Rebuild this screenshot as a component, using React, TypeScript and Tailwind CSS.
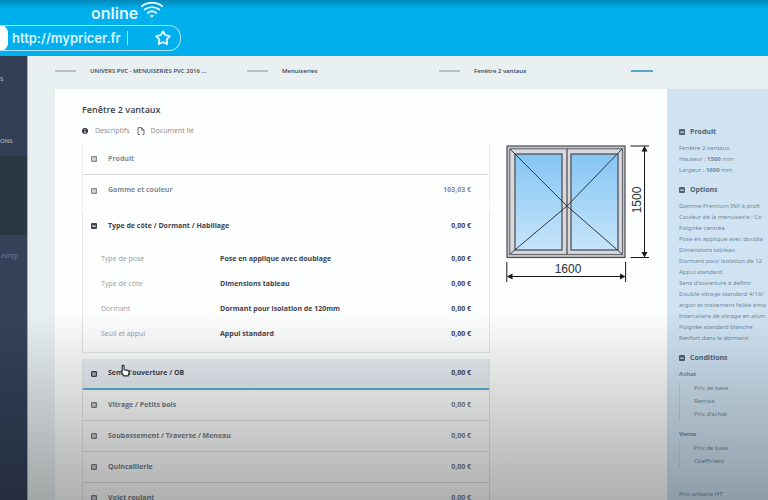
import React, { useState } from "react";
import { Star } from "lucide-react";

const steps = ["UNIVERS PVC - MENUISERIES PVC 2016 ...", "Menuiseries", "Fenêtre 2 vantaux"];

const details = [
  { label: "Type de pose", value: "Pose en applique avec doublage" },
  { label: "Type de côte", value: "Dimensions tableau" },
  { label: "Dormant", value: "Dormant pour isolation de 120mm" },
  { label: "Seuil et appui", value: "Appui standard" },
];

const sections = [
  { id: "sens", name: "Sens d'ouverture / OB" },
  { id: "vitrage", name: "Vitrage / Petits bois" },
  { id: "soubassement", name: "Soubassement / Traverse / Meneau" },
  { id: "quincaillerie", name: "Quincaillerie" },
  { id: "volet", name: "Volet roulant" },
];

const options = [
  "Gamme Premium INF à profi",
  "Couleur de la menuiserie : Co",
  "Poignée centrée",
  "Pose en applique avec doubla",
  "Dimensions tableau",
  "Dormant pour isolation de 12",
  "Appui standard",
  "Sens d'ouverture à definir",
  "Double vitrage standard 4/16/",
  "argon et traitement faible émis",
  "Intercalaire de vitrage en alum",
  "Poignée standard blanche",
  "Renfort dans le dormant",
];

function BoxIcon({ minus = false }: { minus?: boolean }) {
  return (
    <svg viewBox="0 0 6 6" className="w-1.5 h-1.5 shrink-0" aria-hidden="true">
      {minus ? (
        <path fillRule="evenodd" d="M1 0h4a1 1 0 0 1 1 1v4a1 1 0 0 1-1 1H1a1 1 0 0 1-1-1V1a1 1 0 0 1 1-1zM1.300 2.600v1.200h3.400V2.600z" fill="currentColor" />
      ) : (
        <>
          <rect x="0.7" y="0.7" width="4.6" height="4.6" rx="0.6" fill="none" stroke="currentColor" strokeWidth="1.4" />
          <path d="M2 3h2M3 2v2" stroke="currentColor" strokeWidth="0.4" />
        </>
      )}
    </svg>
  );
}

function WifiIcon() {
  return (
    <svg viewBox="0 0 24 18" className="w-6 h-[18px]" fill="none" stroke="currentColor" strokeWidth="1.9" strokeLinecap="round" aria-hidden="true">
      <path d="M1.800 6.200C7.500 1.600 16.500 1.600 22.200 6.200" />
      <path d="M4.800 9.600c4-3.300 10.400-3.300 14.400 0" />
      <path d="M7.800 13c2.500-2 5.900-2 8.400 0" />
      <path d="M10.600 15.600q1.400-.9 2.800 0L12 17z" fill="currentColor" strokeWidth="1" />
    </svg>
  );
}

function WindowDrawing() {
  return (
    <svg viewBox="0 0 144 138" className="w-36 h-[138px] shrink-0" role="img" aria-label="Fenêtre 2 vantaux">
      <defs>
        <linearGradient id="glass" x1="0" y1="0" x2="0" y2="1">
          <stop offset="0" stopColor="#85c5f3" />
          <stop offset="1" stopColor="#c6e4fb" />
        </linearGradient>
      </defs>
      <rect x="2" y="2" width="118" height="111.5" fill="#c3c5c9" stroke="#4a4d52" strokeWidth="1.2" />
      <rect x="4.8" y="4.8" width="112.6" height="105.6" fill="#d9d9dd" stroke="#5b5f65" strokeWidth="1" />
      <rect x="10" y="10" width="47" height="96" fill="url(#glass)" stroke="#565c63" strokeWidth="1.4" />
      <rect x="66" y="10" width="47" height="96" fill="url(#glass)" stroke="#565c63" strokeWidth="1.4" />
      <path d="M62 4.800v105.600" stroke="#45494f" strokeWidth="1.2" />
      <path d="M5 5 62 62 5 110M117 5 62 62l55 48" fill="none" stroke="#2c3945" strokeWidth="1" />
      <g stroke="#15181b" strokeWidth="1" fill="none">
        <path d="M125.500 2H144M125.500 113.500H144M139.500 4v108" />
        <path d="M1.800 118v20M120.600 118v20M4 132.500h114" />
      </g>
      <g fill="#15181b">
        <path d="M139.500 2l-3 5.500h6zM139.500 113.500l-3-5.500h6z" />
        <path d="M2 132.500l5.500-3v6zM120.500 132.500l-5.500-3v6z" />
      </g>
      <g fill="#2b2e31" fontSize="12" fontFamily="'Liberation Sans', Arial, sans-serif" textAnchor="middle">
        <text x="63" y="129">1600</text>
        <text transform="translate(136 56) rotate(-90)">1500</text>
      </g>
    </svg>
  );
}

function PanelTitle({ children }: { children: React.ReactNode }) {
  return (
    <h2 className="flex items-center gap-[5px] text-[7px] leading-[11px] font-bold text-[#4d6376] font-['Open_Sans',sans-serif]">
      <BoxIcon minus />
      {children}
    </h2>
  );
}

export default function App() {
  const [url, setUrl] = useState("http://mypricer.fr");
  const [active, setActive] = useState("sens");

  return (
    <div className="relative h-screen flex flex-col overflow-hidden bg-[#e9f0f1] font-['Open_Sans',sans-serif] text-[7px] text-[#3d424d]">
      <header className="h-14 shrink-0 bg-[linear-gradient(#0089b8,#00afee_9px)] text-[#dff5fd] font-['Inter',sans-serif]">
        <div className="h-[25px] pl-[91px] flex items-start gap-0.5">
          <span className="pt-1 text-[16px] leading-[19px] font-semibold">online</span>
          <WifiIcon />
        </div>
        <div className="flex items-center w-[181px] h-[26px] border border-l-0 border-[#a8e3fa] rounded-r-xl overflow-hidden">
          <div className="w-2 h-[26px] rounded-r-full bg-white shrink-0" />
          <input
            aria-label="Adresse"
            value={url}
            onChange={(e) => setUrl(e.target.value)}
            className="w-[115px] ml-1 bg-transparent outline-none text-[13px] leading-4 font-semibold"
          />
          <div className="w-px h-[14px] bg-[#a8e3fa]" />
          <button aria-label="Favori" className="ml-[27px]">
            <Star className="w-4 h-4" strokeWidth={2.8} />
          </button>
        </div>
      </header>

      <div className="flex-1 min-h-0 flex">
        <nav className="w-7 shrink-0 flex flex-col bg-[#34425a] border-r border-[#a3adba] text-[6px] text-[#c3cbd8] overflow-hidden">
          <div className="h-[100px] bg-[#333f55]">
            <a href="#" className="block pt-[18px] leading-[10px]">S</a>
            <a href="#" className="block pt-[52px] leading-[10px]">ONS</a>
          </div>
          <div className="h-[79px] bg-[#2a3640]" />
          <span className="pt-4 pl-px text-[7px] leading-[10px] italic text-[#6d7f9c]">evray</span>
        </nav>

        <div className="flex-1 min-w-0 flex flex-col pl-[27px]">
          <ol className="h-[33px] shrink-0 flex items-center text-[6px] font-semibold whitespace-nowrap">
            {steps.map((s) => (
              <li key={s} className="w-48 flex items-center gap-[14px] pb-[3px]">
                <span className="w-[21px] h-0.5 bg-[#b3c0cc]" />
                {s}
              </li>
            ))}
            <li className="pb-[3px]">
              <span className="block w-[22px] h-0.5 bg-[#5aa6c4]" />
            </li>
          </ol>

          <div className="flex-1 min-h-0 flex">
            <main className="flex-1 min-w-0 bg-[#fdfefe] pl-[27px] pr-[18px] pt-[14px]">
              <h1 className="text-[9px] leading-[14px] font-semibold">Fenêtre 2 vantaux</h1>
              <div className="mt-2 flex items-center leading-3 text-[#878b92]">
                <svg viewBox="0 0 6 6" className="w-1.5 h-1.5 mr-[7px]" aria-hidden="true">
                  <circle cx="3" cy="3" r="3" fill="#2f3542" />
                  <path d="M3 1.100v.9M2.400 2.800H3v1.800M2.200 4.700h1.700" stroke="#fff" strokeWidth="0.8" fill="none" />
                </svg>
                <a href="#">Descriptifs</a>
                <svg viewBox="0 0 8 8" className="w-2 h-2 ml-[7px] mr-1.5" fill="none" stroke="#5a606b" strokeWidth="0.9" aria-hidden="true">
                  <path d="M3 7.500H1V.6h3.600L7 3v4.500H5.500M4.600.6V3H7" />
                </svg>
                <a href="#">Document lié</a>
              </div>

              <div className="flex gap-[15px] pt-[7px]">
                <div className="flex-1 min-w-0 font-bold">
                  <div className="border-x border-[#e8eaeb] text-[#878b92]">
                    <button className="w-full h-[31px] flex items-center gap-[11px] px-2 border-b border-[#d9dbdd]">
                      <BoxIcon />
                      Produit
                    </button>
                    <button className="w-full h-[31px] flex items-center gap-[11px] pl-2 pr-[18px]">
                      <BoxIcon />
                      Gamme et couleur
                      <span className="ml-auto">103,03 €</span>
                    </button>
                  </div>

                  <section className="mt-1 pb-[5px] border border-t-0 border-[#e3e5e6]">
                    <button className="w-full h-8 flex items-center gap-[11px] pl-2 pr-[18px]">
                      <BoxIcon minus />
                      Type de côte / Dormant / Habillage
                      <span className="ml-auto">0,00 €</span>
                    </button>
                    <dl className="pt-[5px]">
                      {details.map((d) => (
                        <div key={d.label} className="h-[25px] flex items-center px-[18px]">
                          <dt className="w-[119px] font-normal text-[#9a9da2]">{d.label}</dt>
                          <dd>{d.value}</dd>
                          <dd className="ml-auto">0,00 €</dd>
                        </div>
                      ))}
                    </dl>
                  </section>

                  <div className="mt-1.5 border-x border-[#e3e5e6]">
                    {sections.map((s) => (
                      <button
                        key={s.id}
                        onClick={() => setActive(s.id)}
                        className={`w-full h-[31px] flex items-center gap-[11px] pl-2 pr-[18px] ${active === s.id ? "bg-[#e9eff5] border-b-2 border-[#4fb3cf]" : "text-[#777b81] border-b border-[#dcdedf]"}`}
                      >
                        <BoxIcon />
                        {s.name}
                        <span className="ml-auto">0,00 €</span>
                      </button>
                    ))}
                  </div>
                </div>
                <WindowDrawing />
              </div>
            </main>

            <aside className="w-[101px] shrink-0 bg-[#cfe3f2] pl-3 pt-[37px] font-['Noto_Sans',sans-serif] text-[6px] leading-[11px] text-[#71889c] whitespace-nowrap overflow-hidden">
              <PanelTitle>Produit</PanelTitle>
              <div className="mt-1.5">
                <p>Fenêtre 2 vantaux</p>
                <p>Hauteur : <b>1500</b> mm</p>
                <p>Largeur : <b>1600</b> mm</p>
              </div>
              <div className="mt-2">
                <PanelTitle>Options</PanelTitle>
              </div>
              <div className="mt-1.5">
                {options.map((o) => <p key={o}>{o}</p>)}
              </div>
              <div className="mt-2">
                <PanelTitle>Conditions</PanelTitle>
              </div>
              <h3 className="mt-1.5 font-bold">Achat</h3>
              <ul className="mt-0.5 pl-[14px] leading-[13px] border-l border-[#bfd2e0]">
                <li>Prix de base</li>
                <li>Remise</li>
                <li>Prix d'achat</li>
              </ul>
              <h3 className="mt-2 font-bold">Vente</h3>
              <ul className="mt-0.5 pl-[14px] leading-[13px] border-l border-[#bfd2e0]">
                <li>Prix de base</li>
                <li>Coefficient</li>
              </ul>
              <p className="mt-[21px]">Prix unitaire HT</p>
            </aside>
          </div>
        </div>
      </div>

      {/* shade at the foot of the page */}
      <div className="absolute inset-x-0 bottom-0 h-[190px] pointer-events-none bg-[linear-gradient(transparent,rgba(0,0,0,0.16)_50%,rgba(0,0,0,0.31))]" />

      <svg viewBox="0 0 16 20" className="absolute left-[120px] top-[364px] w-[10px] h-[13px] pointer-events-none" aria-hidden="true">
        <path
          d="M5 1.500c1 0 1.500.7 1.500 1.600V9l5.500.8c1.500.3 2.500 1 2.500 2.500 0 2.500-1 4-1.500 6.200H6C5 16 2.500 14 1.500 11.500c.5-1 1.500-.8 2 .3V3.100C3.500 2.200 4 1.500 5 1.500z"
          fill="#fff"
          stroke="#22262b"
          strokeWidth="1.8"
        />
      </svg>
    </div>
  );
}
